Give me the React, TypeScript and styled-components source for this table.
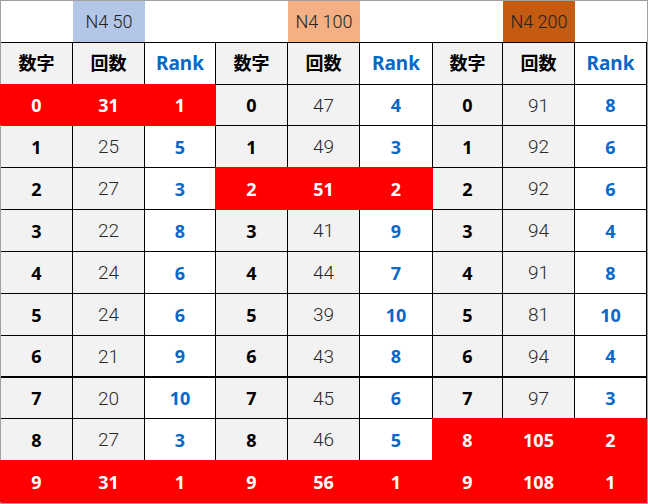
import React from 'react';
import styled, { createGlobalStyle } from 'styled-components';

const GlobalStyle = createGlobalStyle`
  html, body { margin: 0; padding: 0; background: #ffffff; }
  * { box-sizing: border-box; }
`;

type Kind = 'num' | 'count' | 'rank';

const groups = [
  { title: 'N4 50', bg: '#b4c6e7' },
  { title: 'N4 100', bg: '#f4b084' },
  { title: 'N4 200', bg: '#c55a11' },
];

// [数字, 回数, Rank] for each group; hot = red highlight
const rows: { n: number; c: number; r: number; hot: boolean }[][] = [
  [{ n: 0, c: 31, r: 1, hot: true }, { n: 0, c: 47, r: 4, hot: false }, { n: 0, c: 91, r: 8, hot: false }],
  [{ n: 1, c: 25, r: 5, hot: false }, { n: 1, c: 49, r: 3, hot: false }, { n: 1, c: 92, r: 6, hot: false }],
  [{ n: 2, c: 27, r: 3, hot: false }, { n: 2, c: 51, r: 2, hot: true }, { n: 2, c: 92, r: 6, hot: false }],
  [{ n: 3, c: 22, r: 8, hot: false }, { n: 3, c: 41, r: 9, hot: false }, { n: 3, c: 94, r: 4, hot: false }],
  [{ n: 4, c: 24, r: 6, hot: false }, { n: 4, c: 44, r: 7, hot: false }, { n: 4, c: 91, r: 8, hot: false }],
  [{ n: 5, c: 24, r: 6, hot: false }, { n: 5, c: 39, r: 10, hot: false }, { n: 5, c: 81, r: 10, hot: false }],
  [{ n: 6, c: 21, r: 9, hot: false }, { n: 6, c: 43, r: 8, hot: false }, { n: 6, c: 94, r: 4, hot: false }],
  [{ n: 7, c: 20, r: 10, hot: false }, { n: 7, c: 45, r: 6, hot: false }, { n: 7, c: 97, r: 3, hot: false }],
  [{ n: 8, c: 27, r: 3, hot: false }, { n: 8, c: 46, r: 5, hot: false }, { n: 8, c: 105, r: 2, hot: true }],
  [{ n: 9, c: 31, r: 1, hot: true }, { n: 9, c: 56, r: 1, hot: true }, { n: 9, c: 108, r: 1, hot: true }],
];

const Sheet = styled.div`
  width: 648px;
  height: 504px;
  border: 1px solid #a0a0a0;
  display: grid;
  grid-template-columns: 72px 72px 71px 72px 72px 73px 70px 72px 72px;
  grid-template-rows: 42px 42px 41px 42px 42px 42px 42px 42px 42px 41px 42px 42px;
  background: #ffffff;
`;

const TitleCell = styled.div<{ $bg?: string }>`
  background: ${(p) => p.$bg || '#ffffff'};
  border-bottom: 1px solid #000000;
  display: flex;
  align-items: center;
  justify-content: center;
  font-family: Roboto, "Noto Sans", sans-serif;
  font-weight: 300;
  font-size: 18px;
  color: #222222;
`;

const Cell = styled.div<{ $kind: Kind; $hot?: boolean; $thick?: boolean }>`
  display: flex;
  align-items: center;
  justify-content: center;
  border-right: 1px solid #000000;
  border-bottom: ${(p) => (p.$thick ? '2px' : '1px')} solid #000000;
  background: ${(p) => (p.$kind === 'rank' ? '#ffffff' : '#f2f2f2')};
  color: ${(p) => (p.$kind === 'rank' ? '#0868c8' : p.$kind === 'count' ? '#2a2a2a' : '#000000')};
  font-family: ${(p) => (p.$kind === 'count' ? 'Roboto, "Noto Sans", sans-serif' : '"Noto Sans", "Noto Sans CJK JP", sans-serif')};
  font-weight: ${(p) => (p.$kind === 'count' ? 300 : 700)};
  font-size: ${(p) => (p.$kind === 'count' ? '19px' : '18px')};

  ${(p) =>
    p.$hot &&
    `
    background: #ff0000;
    color: #ffffff;
    font-family: "Noto Sans", sans-serif;
    font-weight: 700;
    font-size: 18px;
    border-color: #ff0000;
    box-shadow: -1px -1px 0 0 #ff0000;
  `}
`;

const HeadCell = styled(Cell)`
  font-family: "Noto Sans CJK JP", "Noto Sans", sans-serif;
  font-size: 18px;
  font-weight: 700;
  color: #000000;
  padding-bottom: 3px;
`;

const RankHead = styled(Cell)`
  font-family: "Noto Sans", sans-serif;
  font-size: 19px;
  padding-bottom: 2px;
`;

export default function App() {
  return (
    <>
      <GlobalStyle />
      <Sheet>
        {groups.map((g) => (
          <React.Fragment key={g.title}>
            <TitleCell />
            <TitleCell $bg={g.bg}>{g.title}</TitleCell>
            <TitleCell />
          </React.Fragment>
        ))}
        {groups.map((g) => (
          <React.Fragment key={'h' + g.title}>
            <HeadCell $kind="num">数字</HeadCell>
            <HeadCell $kind="count">回数</HeadCell>
            <RankHead $kind="rank">Rank</RankHead>
          </React.Fragment>
        ))}
        {rows.map((row, i) =>
          row.map((d, j) => (
            <React.Fragment key={i + '-' + j}>
              <Cell $kind="num" $hot={d.hot} $thick={i === 6}>{d.n}</Cell>
              <Cell $kind="count" $hot={d.hot} $thick={i === 6}>{d.c}</Cell>
              <Cell $kind="rank" $hot={d.hot} $thick={i === 6}>{d.r}</Cell>
            </React.Fragment>
          ))
        )}
      </Sheet>
    </>
  );
}
